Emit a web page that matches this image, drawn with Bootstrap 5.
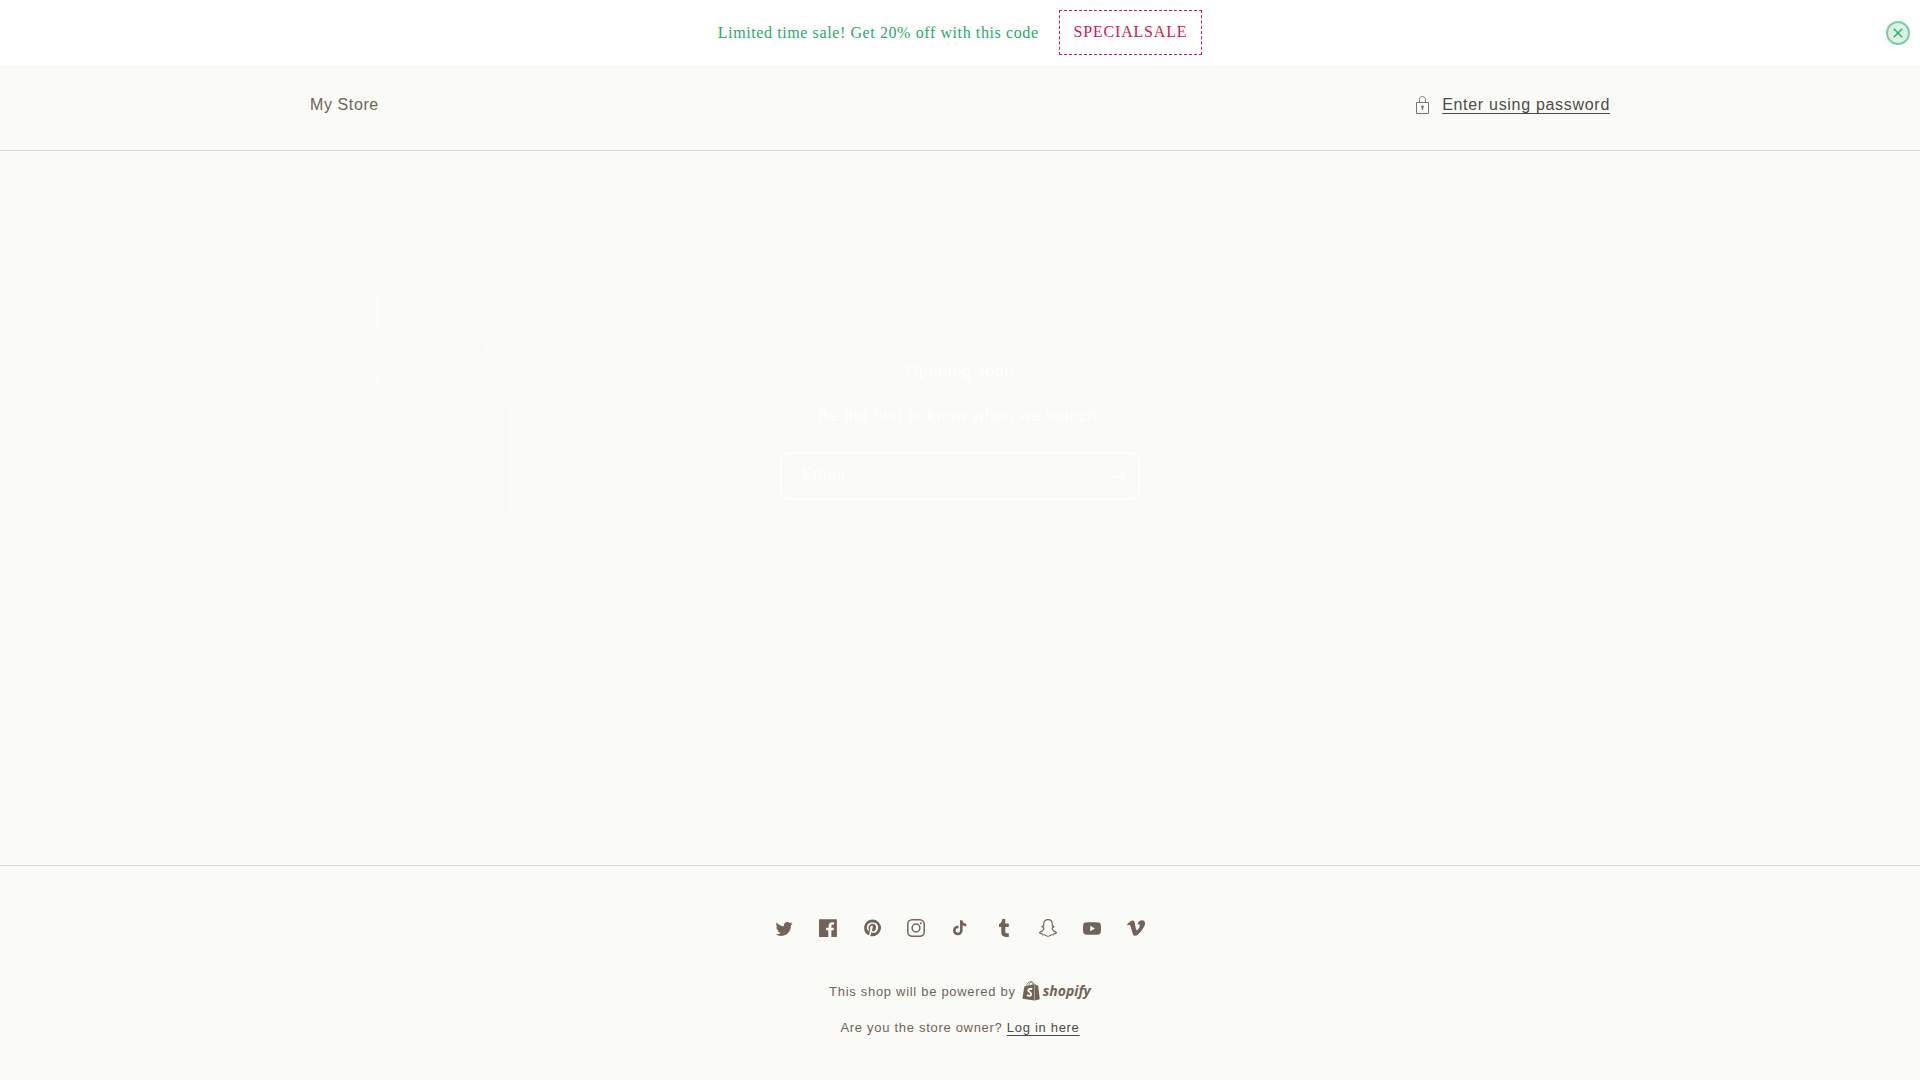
<!DOCTYPE html>
<html lang="en">
<head>
<meta charset="utf-8">
<meta name="viewport" content="width=device-width, initial-scale=1">
<title>My Store</title>
<link href="https://cdn.jsdelivr.net/npm/bootstrap@5.3.0/dist/css/bootstrap.min.css" rel="stylesheet">
<style>
  :root { --paper: #fafbf6; --brown: #70645a; --ink: #4d4b48; --rule: #dadbd6; --green: #1fac66; --red: #d4154f; }
  body { background: var(--paper); color: var(--brown); font: 16px/29px "Liberation Sans", Arial, sans-serif; letter-spacing: .6px; }
  .sale-bar { background: #fff; color: var(--green); font-family: "Liberation Serif", "Times New Roman", serif; padding: 10px; line-height: 24px; }
  .coupon { border: 1px dashed var(--red); color: var(--red); padding: 9px 14px 10px; background: transparent; font: inherit; letter-spacing: .8px; line-height: 24px; }
  .dismiss { right: 10px; top: 50%; width: 24px; height: 24px; margin-top: -12px; border: 2px solid #7bcfa4; border-radius: 50%; background: #dcf2e6; color: var(--green); }
  .store-width { max-width: 1300px; }
  .store-header { border-bottom: 1px solid var(--rule); padding: 25px 0 31px; }
  .store-name, .store-name:hover { color: var(--brown); }
  .text-link { color: var(--ink); letter-spacing: .7px; text-decoration: underline; text-decoration-thickness: 1px; text-underline-offset: 3px; }
  .unlock { gap: 10px; }
  .lock { color: #777572; }
  .hero { height: 560px; color: #fff; padding-top: 205px; letter-spacing: .7px; }
  .signup { width: 360px; height: 48px; border: 2px solid #fdfdfc; border-radius: 8px; margin-top: 24px; }
  .signup input { color: #fff; padding: 0 20px 3px; letter-spacing: .7px; line-height: 24px; }
  .signup input::placeholder { color: #fff; opacity: 1; }
  .signup button { width: 44px; color: #fff; }
  .store-footer { border-top: 1px solid var(--rule); font-size: 13px; letter-spacing: .7px; line-height: 24px; padding: 40px 0; }
  .socials a { width: 44px; height: 44px; color: var(--brown); }
  .powered { margin-top: 30px; gap: 6px; }
  .owner { margin-top: 12px; }
  .wordmark { font: italic 700 14px/22px "Open Sans", sans-serif; letter-spacing: 0; color: var(--brown); gap: 3px; padding-bottom: 2px; }
</style>
<script src="https://cdn.jsdelivr.net/npm/bootstrap@5.3.0/dist/js/bootstrap.bundle.min.js"></script>
</head>
<body class="d-flex flex-column min-vh-100">

<div class="sale-bar position-relative d-flex justify-content-center align-items-center">
  <span class="me-3 pe-1">Limited time sale! Get 20% off with this code</span>
  <button type="button" class="coupon">SPECIALSALE</button>
  <button type="button" class="dismiss position-absolute p-0 d-flex align-items-center justify-content-center" aria-label="Close">
    <svg width="10" height="10" viewBox="0 0 10 10" fill="none" stroke="currentColor" stroke-width="1.3"><path d="M.8.8l8.4 8.4M9.2.8L.8 9.2"/></svg>
  </button>
</div>

<header class="store-header">
  <div class="store-width container-fluid px-0 d-flex justify-content-between">
    <a class="store-name text-decoration-none" href="#">My Store</a>
    <a class="text-link unlock d-flex align-items-center" href="#">
      <svg class="lock flex-shrink-0" width="20" height="20" viewBox="0 0 20 20" fill="none" stroke="currentColor" aria-hidden="true">
        <path d="M4.500 7.500h12v11h-12zM7.500 7.500V4.600c0-2 1.200-3.100 3-3.100s3 1.100 3 3.100v2.900"/><path d="M10.500 11v4" stroke-width="1.300"/><circle cx="10.500" cy="11.700" r=".9" fill="currentColor"/>
      </svg>
      <span>Enter using password</span>
    </a>
  </div>
</header>

<main class="flex-grow-1">
  <section class="hero position-relative overflow-hidden">
    <svg class="position-absolute top-0 start-0 w-100 h-100" viewBox="0 151 1920 560" preserveAspectRatio="none" aria-hidden="true">
      <g fill="#f9f9f8">
        <path d="M75 151H120V711H0V240Q18 183 75 151Z"/>
        <path d="M383 151H770Q774 220 823 274Q806 303 775 323H675C665 275 630 241 576 241C522 241 488 285 483 335Q484 375 508 408V517C435 472 386 415 383 345Z"/>
        <path d="M1777 472H1920V711H1586V509H1777Z"/>
        <path d="M1410 509H1472Q1380 590 1371 690Q1360 600 1303 538H1400Q1410 538 1410 525Z"/>
      </g>
      <g fill="#fbfcf7">
        <path d="M120 151H250C335 180 383 255 383 345C383 450 298 530 190 530H120Z"/>
        <path d="M257 711C265 605 345 530 440 530H508L520 538H578C580 610 625 672 696 711Z"/>
        <path d="M1388 151Q1360 240 1386 323H1402Q1410 323 1410 332V365C1445 430 1515 472 1590 472H1830V151Z"/>
        <circle cx="960" cy="229" r="24"/>
      </g>
      <path fill="#fafbf6" d="M1525 151C1475 191 1475 275 1514 317C1560 370 1645 370 1691 317C1732 270 1730 191 1680 151Z"/>
    </svg>
    <div class="position-relative d-flex flex-column align-items-center">
      <h1 class="m-0 fw-normal fs-6 lh-base py-1">Opening soon</h1>
      <p class="mt-3 mb-0 lh-base">Be the first to know when we launch.</p>
      <form class="signup d-flex">
        <label class="visually-hidden" for="email">Email</label>
        <input id="email" type="email" class="form-control border-0 bg-transparent shadow-none flex-grow-1" placeholder="Email">
        <button type="submit" class="btn p-0 border-0" aria-label="Subscribe">
          <svg width="14" height="10" viewBox="0 0 14 10" fill="none" stroke="currentColor" stroke-width="1.200"><path d="M0 5h13M8.500.700L13 5 8.500 9.300"/></svg>
        </button>
      </form>
    </div>
  </section>
</main>

<footer class="store-footer text-center">
  <nav class="socials d-flex justify-content-center" aria-label="Social media">
    <a href="#" aria-label="Twitter" class="d-flex align-items-center justify-content-center"><svg width="18" height="15" viewBox="0 0 18 15" fill="currentColor"><path d="M17.640 2.600a7.330 7.330 0 0 1-1.750 1.820c0 .050 0 .130.020.230l.020.230a9.970 9.970 0 0 1-1.690 5.540c-.570.850-1.240 1.620-2.020 2.280a9.090 9.090 0 0 1-2.820 1.600 10.230 10.230 0 0 1-8.900-.980c.340.020.610.040.830.040 1.640 0 3.100-.500 4.380-1.500a3.600 3.600 0 0 1-3.300-2.450A2.910 2.910 0 0 0 4 9.350a3.470 3.470 0 0 1-2.020-1.210 3.370 3.370 0 0 1-.800-2.220v-.030c.460.240.980.370 1.580.400a3.450 3.450 0 0 1-1.540-2.900c0-.610.140-1.200.450-1.790a9.680 9.680 0 0 0 3.200 2.600 10 10 0 0 0 4.080 1.070 3 3 0 0 1-.130-.800c0-.970.340-1.800 1.030-2.480A3.450 3.450 0 0 1 12.400.960a3.490 3.490 0 0 1 2.540 1.100c.800-.150 1.540-.440 2.230-.850a3.400 3.400 0 0 1-1.540 1.940c.740-.100 1.400-.280 2.010-.540z"/></svg></a>
    <a href="#" aria-label="Facebook" class="d-flex align-items-center justify-content-center"><svg width="18" height="18" viewBox="0 0 18 18" fill="currentColor"><path d="M17.400.300c.300 0 .500.200.500.500v16.700c0 .300-.200.500-.500.500h-5v-6.700h2.250l.310-2.650h-2.560v-1.700c0-.400.100-.720.280-.930.180-.200.500-.320 1-.320h1.370V3.350c-.600-.060-1.270-.100-2.010-.100-1.010 0-1.830.300-2.450.900-.620.600-.930 1.440-.930 2.530v1.970H7.040v2.650h2.240V18H.500c-.300 0-.500-.200-.500-.500V.800C0 .500.200.300.500.300z"/></svg></a>
    <a href="#" aria-label="Pinterest" class="d-flex align-items-center justify-content-center"><svg width="17" height="18" viewBox="0 0 17 18" fill="currentColor"><path d="M8.480.580a8.420 8.420 0 0 1 5.900 2.450 8.420 8.420 0 0 1 1.330 10.080 8.280 8.280 0 0 1-7.230 4.160 8.500 8.500 0 0 1-2.370-.320c.420-.680.700-1.290.850-1.800l.590-2.290c.140.280.410.520.800.730.400.200.800.310 1.240.310.870 0 1.650-.250 2.340-.750a4.870 4.870 0 0 0 1.600-2.050 7.300 7.300 0 0 0 .560-2.930c0-1.300-.500-2.410-1.490-3.360a5.270 5.270 0 0 0-3.800-1.430c-.930 0-1.800.160-2.580.480A5.230 5.230 0 0 0 2.850 8.600c0 .750.140 1.410.430 1.980.280.560.700.960 1.270 1.200.100.040.190.040.260 0 .070-.030.120-.100.150-.200l.180-.680c.050-.150.020-.300-.110-.450a2.350 2.350 0 0 1-.570-1.630A3.960 3.960 0 0 1 8.600 4.800c1.090 0 1.940.300 2.540.890.610.600.920 1.370.920 2.320 0 .800-.110 1.540-.330 2.210a3.970 3.970 0 0 1-.930 1.620c-.400.400-.870.600-1.400.600-.430 0-.780-.150-1.060-.470-.270-.320-.360-.700-.260-1.130a111.140 111.140 0 0 1 .470-1.600l.180-.730c.060-.260.090-.470.090-.650 0-.360-.100-.660-.280-.890-.200-.230-.470-.350-.830-.350-.450 0-.830.200-1.130.620-.300.410-.460.930-.460 1.560a4.100 4.100 0 0 0 .180 1.150l.060.150c-.600 2.580-.950 4.100-1.080 4.540-.120.550-.160 1.200-.130 1.940a8.400 8.400 0 0 1-5-7.650c0-2.300.810-4.280 2.440-5.900A8.040 8.040 0 0 1 8.480.570z"/></svg></a>
    <a href="#" aria-label="Instagram" class="d-flex align-items-center justify-content-center"><svg width="18" height="18" viewBox="0 0 18 18" fill="none" stroke="currentColor" stroke-width="1.500"><rect x=".75" y=".75" width="16.500" height="16.500" rx="4.500"/><circle cx="9" cy="9" r="3.900"/><circle cx="13.800" cy="4.200" r="1.050" fill="currentColor" stroke="none"/></svg></a>
    <a href="#" aria-label="TikTok" class="d-flex align-items-center justify-content-center"><svg width="14" height="16" viewBox="0 0 16 18" fill="currentColor"><path d="M8.020 0H11s-.170 3.820 4.130 4.100v2.950s-2.300.140-4.130-1.260l.030 6.100a5.520 5.520 0 1 1-5.510-5.520h.770V9.400a2.500 2.500 0 1 0 1.760 2.400L8.020 0z"/></svg></a>
    <a href="#" aria-label="Tumblr" class="d-flex align-items-center justify-content-center"><svg width="10" height="18" viewBox="0 0 10 18" fill="currentColor"><path d="M6.300 0v4.400h3.500v3.600H6.300v4.500c0 1.300.600 1.800 1.800 1.800h1.700V18H7c-3 0-4.700-1.500-4.700-4.400V8H0V5.100C2 4.400 2.900 2.900 3.200 0z"/></svg></a>
    <a href="#" aria-label="Snapchat" class="d-flex align-items-center justify-content-center"><svg width="18" height="18" viewBox="0 0 18 18" fill="none" stroke="currentColor" stroke-width="1.100" stroke-linejoin="round"><path d="M9 .600c2.700 0 4.300 1.800 4.300 4.200l-.100 2.200c.500.300 1-.300 1.500 0 .700.500-.100 1.200-1.300 1.700-.500.300-.500.700-.200 1.300.800 1.700 2 2.700 4.200 3.200.200.900-.800 1.300-2.400 1.500l-.400 1.100c-.900 0-1.900-.300-2.800.200-.900.600-1.600 1.300-2.800 1.300s-1.900-.700-2.800-1.300c-.900-.500-1.900-.200-2.800-.200L3 14.700C1.400 14.500.400 14.100.600 13.200c2.200-.500 3.400-1.500 4.200-3.200.300-.600.300-1-.200-1.300C3.400 8.200 2.600 7.500 3.300 7c.500-.300 1 .300 1.500 0l-.100-2.200C4.700 2.400 6.300.600 9 .600z"/></svg></a>
    <a href="#" aria-label="YouTube" class="d-flex align-items-center justify-content-center"><svg width="18" height="13" viewBox="0 0 100 70" fill="currentColor"><path d="M98 11c2 7.700 2 24 2 24s0 16.300-2 24a12.500 12.500 0 0 1-9 9c-7.700 2-39 2-39 2s-31.300 0-39-2a12.500 12.500 0 0 1-9-9c-2-7.700-2-24-2-24s0-16.300 2-24c1.200-4.400 4.600-7.800 9-9 7.700-2 39-2 39-2s31.300 0 39 2c4.400 1.200 7.800 4.600 9 9zM40 50l26-15-26-15v30z"/></svg></a>
    <a href="#" aria-label="Vimeo" class="d-flex align-items-center justify-content-center"><svg width="18" height="18" viewBox="0 0 24 24" fill="currentColor"><path d="M23.977 6.416c-.105 2.338-1.739 5.543-4.894 9.609-3.268 4.247-6.026 6.370-8.290 6.370-1.409 0-2.578-1.294-3.553-3.881L5.322 11.400C4.603 8.816 3.834 7.522 3.010 7.522c-.179 0-.806.378-1.881 1.132L0 7.197a315.065 315.065 0 0 0 3.501-3.128C5.080 2.701 6.266 1.984 7.055 1.910c1.867-.180 3.016 1.100 3.447 3.838.465 2.953.789 4.789.971 5.507.539 2.450 1.131 3.674 1.776 3.674.502 0 1.256-.796 2.265-2.385 1.004-1.589 1.540-2.797 1.612-3.628.144-1.371-.395-2.061-1.614-2.061-.574 0-1.167.121-1.777.391 1.186-3.868 3.434-5.757 6.762-5.637 2.473.060 3.628 1.664 3.493 4.797z"/></svg></a>
  </nav>
  <div class="powered d-flex justify-content-center align-items-center">
    <span>This shop will be powered by</span>
    <a href="#" class="wordmark text-decoration-none d-flex align-items-center">
      <svg width="18" height="20" viewBox="0 0 18 20" aria-hidden="true"><path fill="currentColor" d="M2.300 5.600l10.300-2.700v16.700L.400 17.700zM13 2.900l1.500 1.300 1.600.300 1.700 13.700-4.800 1.400z"/><path fill="none" stroke="currentColor" stroke-width=".8" d="M4.600 5.300C5 2.500 6.700.700 8.500.500c1.700 0 2.500 1.300 2.600 3.400M7 4.600c.200-2 1.300-3.700 3-3.500 1 .100 1.700.900 2 2.200"/><path fill="none" stroke="#fafbf6" stroke-width="1.800" d="M10.200 8.100C8.300 7.300 6.200 8 6.300 9.500c.100 1.600 3 1.700 2.900 3.700-.100 1.900-2.300 2.200-4.200.900"/></svg>
      <span>shopify</span>
    </a>
  </div>
  <div class="owner">Are you the store owner? <a class="text-link" href="#">Log in here</a></div>
</footer>
</body>
</html>
